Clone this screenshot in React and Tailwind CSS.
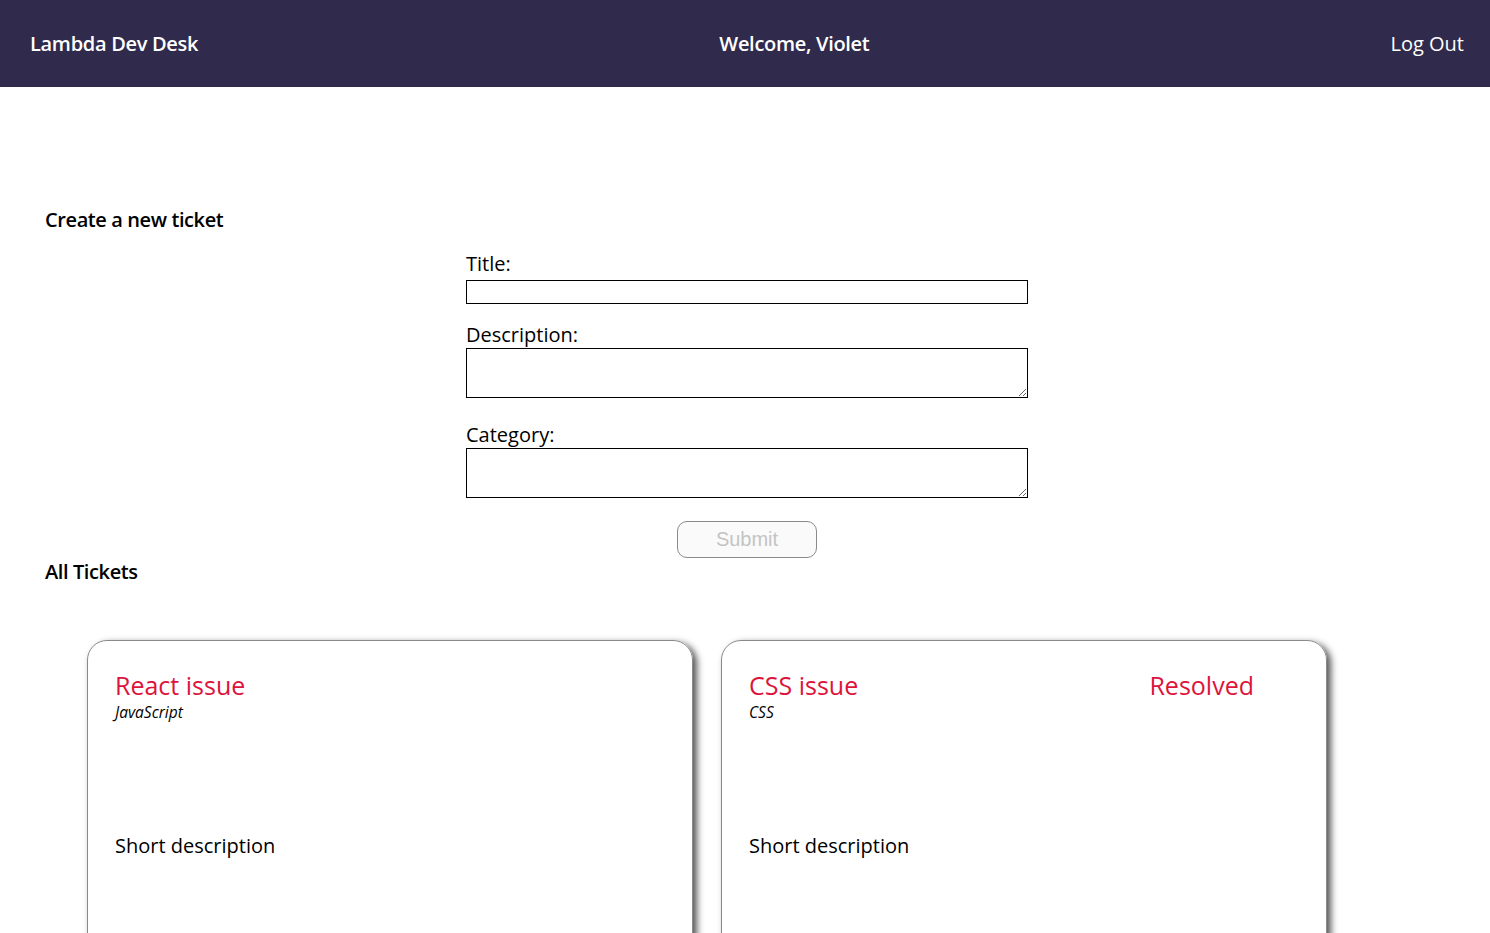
export default function App() {
  const tickets = [
    { title: "React issue", category: "JavaScript", desc: "Short description", status: "" },
    { title: "CSS issue", category: "CSS", desc: "Short description", status: "Resolved" },
  ];
  return (
    <div className="min-h-[933px] bg-white text-black" style={{ fontFamily: '"Open Sans", sans-serif' }}>
      <header className="flex h-[87px] items-center justify-between bg-[#302b4c] pl-[30px] pr-[26px] text-white">
        <div className="text-[20px] font-semibold tracking-[-0.3px]">Lambda Dev Desk</div>
        <div className="text-[20px] font-semibold tracking-[-0.3px]">Welcome, Violet</div>
        <div className="text-[20px]">Log Out</div>
      </header>
      <main className="px-[45px]">
        <h3 className="mt-[119px] text-[20px] font-semibold leading-[28px] tracking-[-0.4px]">Create a new ticket</h3>
        <form className="ml-[421px] w-[562px]" onSubmit={(e) => e.preventDefault()}>
          <label className="mt-[17px] block text-[20px] leading-[26px]">Title:</label>
          <input className="mt-[3px] block h-[24px] w-full border border-black" />
          <label className="mt-[18px] block text-[20px] leading-[26px]">Description:</label>
          <textarea className="block h-[50px] w-full border border-black" />
          <label className="mt-[24px] block text-[20px] leading-[26px]">Category:</label>
          <textarea className="block h-[50px] w-full border border-black" />
          <button
            type="submit"
            disabled
            className="mx-auto mt-[23px] block h-[37px] w-[140px] rounded-[10px] border border-[#8a8a8a] bg-[#fafafa] pb-[2px] text-[20px] text-[#c4c4c4]"
            style={{ fontFamily: '"Liberation Sans", Arial, sans-serif' }}
          >
            Submit
          </button>
        </form>
        <h3 className="text-[20px] font-semibold leading-[28px] tracking-[-0.4px]">All Tickets</h3>
        <div className="mt-[54px] flex gap-[28px] pl-[42px]">
          {tickets.map((t) => (
            <div
              key={t.title}
              className="h-[340px] w-[606px] rounded-[20px] border border-[#8a8a8a] pl-[27px] pr-[72px] pt-[26px] shadow-[4px_3px_7px_#555]"
            >
              <div className="flex justify-between">
                <div className="text-[25px] leading-[36px] text-[#dc143c]">{t.title}</div>
                {t.status && <div className="text-[25px] leading-[36px] text-[#dc143c]">{t.status}</div>}
              </div>
              <div className="text-[15.5px] font-medium italic leading-[18px]">{t.category}</div>
              <div className="mt-[112px] text-[20px] leading-[26px]">{t.desc}</div>
            </div>
          ))}
        </div>
      </main>
    </div>
  );
}
